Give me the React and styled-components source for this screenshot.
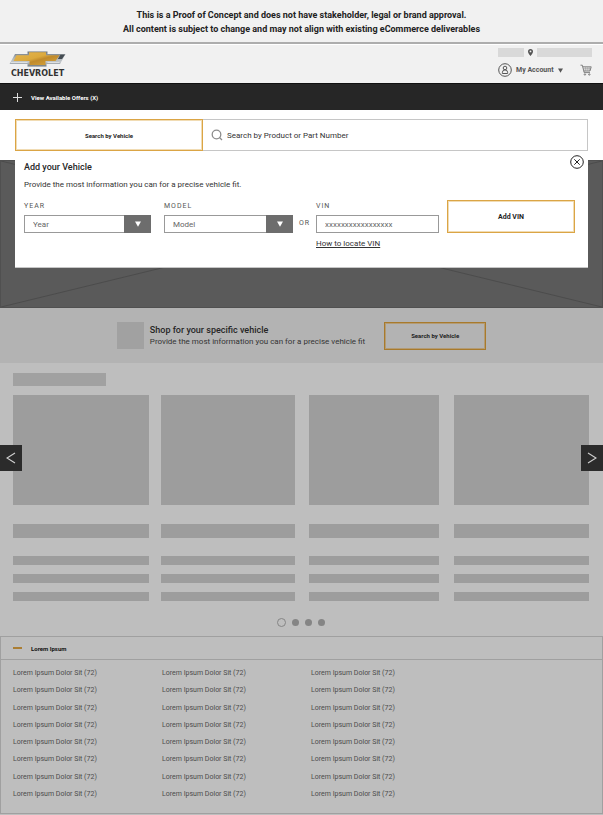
import React from "react";
import styled, { createGlobalStyle } from "styled-components";

const GlobalStyle = createGlobalStyle`
  *, *::before, *::after { box-sizing: border-box; }
  body { margin: 0; background: #bebebe; font-family: Roboto, "Liberation Sans", sans-serif; color: #262626; }
  button, input, select { font-family: inherit; margin: 0; border-radius: 0; }
  h2, p, ul { margin: 0; padding: 0; }
`;

const Notice = styled.p`
  background: #f1f1f1;
  border-bottom: 2px solid #adadad;
  padding: 8px 12px 6px;
  text-align: center;
  font-size: 9px;
  font-weight: 700;
  line-height: 14px;
  color: #222;
`;

const Header = styled.header`
  display: flex;
  justify-content: space-between;
  align-items: flex-start;
  min-height: 39px;
  padding: 3px 11px 0 9px;
  background: #f1f1f1;
  border-top: 1px solid #fff;
`;

const Brand = styled.a`
  display: flex;
  flex-direction: column;
  align-items: center;
  gap: 2px;
  margin-top: 3px;
  color: #333;
  text-decoration: none;
  font: 700 8px/10px "DejaVu Sans", sans-serif;
  svg { display: block; }
`;

const Tools = styled.div`
  display: flex;
  flex-direction: column;
  gap: 6px;
  width: 94px;
`;

const ToolRow = styled.div`
  display: flex;
  align-items: center;
  justify-content: space-between;
`;

const Block = styled.div`
  width: ${(p) => p.$w};
  height: ${(p) => p.$h};
  background: ${(p) => p.$tone || "#9d9d9d"};
`;

const PlainButton = styled.button`
  display: flex;
  align-items: center;
  gap: 4px;
  padding: 0;
  border: 0;
  background: none;
  color: #555;
  font-size: 7px;
  font-weight: 700;
  line-height: 14px;
  white-space: nowrap;
  svg { display: block; flex: none; }
`;

const Offers = styled.button`
  display: flex;
  align-items: center;
  gap: 9px;
  width: 100%;
  height: 27px;
  padding: 0 13px;
  border: 0;
  border-top: 1px solid #111;
  background: #262626;
  color: #fff;
  font-size: 6px;
  font-weight: 700;
`;

const SearchZone = styled.section`
  position: relative;
  background: #fff;
  padding: 9px 15px;
`;

const SearchRow = styled.div`
  display: grid;
  grid-template-columns: 188fr 385fr;
  height: 32px;
`;

const GoldButton = styled.button`
  height: ${(p) => p.$h};
  width: ${(p) => p.$w || "100%"};
  padding: 0;
  border: ${(p) => (p.$muted ? "1px solid #a87a2c" : "1px solid #dba545")};
  outline: 1px solid ${(p) => (p.$muted ? "#b39b74" : "#f1dcb4")};
  outline-offset: -2px;
  background: transparent;
  color: #1e1e1e;
  font-size: ${(p) => p.$size || "6px"};
  font-weight: 700;
`;

const SearchBox = styled.label`
  display: flex;
  align-items: center;
  gap: 4px;
  padding-left: 8px;
  border: 1px solid #c6c6c6;
  border-left: 0;
`;

const SearchInput = styled.input`
  flex: 1;
  min-width: 0;
  padding: 0;
  border: 0;
  background: none;
  font-size: 8px;
  color: #333;
  &::placeholder { color: #333; opacity: 1; }
`;

const Panel = styled.form`
  position: absolute;
  z-index: 2;
  left: 15px;
  right: 15px;
  top: 41px;
  min-height: 117px;
  padding: 10px 13px 16px 9px;
  background: #fff;
  border-bottom: 1px solid #c6c6c6;
`;

const Close = styled.button`
  position: absolute;
  top: 4px;
  right: 4px;
  padding: 0;
  border: 0;
  background: none;
  svg { display: block; }
`;

const Title = styled.h2`
  font-size: 9px;
  font-weight: 500;
  line-height: 12px;
`;

const Copy = styled.p`
  font-size: 8px;
  line-height: 12px;
  color: #333;
`;

const PanelCopy = styled(Copy)`
  margin-top: 6px;
`;

const Fields = styled.div`
  display: grid;
  grid-template-columns: 127fr 13px 129fr 23px 123fr 8px 128fr;
  margin-top: 9px;
`;

const Field = styled.div`
  display: flex;
  flex-direction: column;
`;

const Label = styled.label`
  font-size: 7px;
  line-height: 10px;
  margin: 1px 0 4px;
  letter-spacing: 1px;
  color: #555;
`;

const Or = styled.span`
  align-self: start;
  justify-self: center;
  margin-top: 18px;
  font-size: 7px;
  line-height: 10px;
  letter-spacing: 1px;
  color: #555;
`;

const SelectWrap = styled.div`
  display: grid;
  grid-template-columns: 1fr 27px;
`;

const Select = styled.select`
  grid-area: 1 / 1 / 2 / 3;
  appearance: none;
  height: 18px;
  padding: 0 30px 0 8px;
  border: 1px solid #999;
  background: #fff;
  color: #666;
  font-size: 8px;
`;

const SelectArrow = styled.span`
  grid-area: 1 / 2;
  display: grid;
  place-items: center;
  background: #6d6d6d;
  pointer-events: none;
`;

const VinInput = styled.input`
  width: 100%;
  height: 18px;
  padding: 0 8px;
  border: 1px solid #999;
  color: #666;
  font-size: 8px;
  &::placeholder { color: #666; opacity: 1; }
`;

const VinLink = styled.a`
  align-self: flex-start;
  margin-top: 5px;
  font-size: 8px;
  line-height: 12px;
  color: #333;
  text-underline-offset: 1px;
`;

const Hero = styled.div`
  height: 148px;
  background: #5a5a5a;
  border: 1px solid #505050;
  svg { display: block; width: 100%; height: 100%; }
`;

const Promo = styled.section`
  display: flex;
  align-items: center;
  justify-content: center;
  min-height: 55px;
  background: #b3b3b3;
`;

const PromoText = styled.div`
  margin: 0 19px 0 6px;
`;

const Carousel = styled.section`
  position: relative;
  padding: 10px 14px 9px 13px;
`;

const Cards = styled.div`
  display: grid;
  grid-template-columns: 136fr 12fr 134fr 15fr 130fr 15fr 135fr;
  margin-top: 9px;
`;

const Card = styled.article`
  display: flex;
  flex-direction: column;
  gap: 9px;
  &:nth-child(2) { grid-column: 3; }
  &:nth-child(3) { grid-column: 5; }
  &:nth-child(4) { grid-column: 7; }
`;

const CardTitle = styled.div`
  padding: 10px 0 9px;
`;

const Arrow = styled.button`
  position: absolute;
  top: 82px;
  ${(p) => p.$side}: 0;
  display: grid;
  place-items: center;
  width: 22px;
  height: 26px;
  padding: 0;
  border: 0;
  background: #2b2b2b;
`;

const Dots = styled.div`
  display: flex;
  align-items: center;
  justify-content: center;
  gap: 6px;
  margin-top: 17px;
`;

const Dot = styled.button`
  width: ${(p) => (p.$on ? "9px" : "7px")};
  height: ${(p) => (p.$on ? "9px" : "7px")};
  padding: 0;
  border: ${(p) => (p.$on ? "1px solid #858585" : "0")};
  border-radius: 50%;
  background: ${(p) => (p.$on ? "none" : "#858585")};
`;

const Accordion = styled.section`
  border: 1px solid #a0a0a0;
`;

const AccordionHead = styled.button`
  display: flex;
  align-items: center;
  gap: 9px;
  width: 100%;
  height: 23px;
  padding: 0 12px;
  border: 0;
  border-bottom: 1px solid #a0a0a0;
  background: none;
  color: #111;
  font-size: 6px;
  font-weight: 700;
`;

const LinkColumns = styled.div`
  display: grid;
  grid-template-columns: 149fr 149fr 291fr;
  padding: 8px 0 14px 12px;
`;

const LinkList = styled.ul`
  display: flex;
  flex-direction: column;
  justify-content: space-between;
  min-height: 131px;
  list-style: none;
  font-size: 7px;
  line-height: 10px;
  a { color: #4c4c4c; text-decoration: none; }
`;

const Bowtie = () => (
  <svg width="57" height="16" viewBox="0 0 57 16" aria-hidden="true">
    <defs>
      <linearGradient id="gold" x1="0" y1="0" x2="1" y2="1">
        <stop offset="0" stopColor="#e6b54d" />
        <stop offset=".45" stopColor="#dba93d" />
        <stop offset=".58" stopColor="#c08a2b" />
        <stop offset="1" stopColor="#dba93d" />
      </linearGradient>
      <linearGradient id="steel" x1="0" y1="0" x2="0" y2="1">
        <stop offset="0" stopColor="#6b7277" />
        <stop offset=".4" stopColor="#a9b0b5" />
        <stop offset=".7" stopColor="#c3c8cc" />
        <stop offset="1" stopColor="#6b747a" />
      </linearGradient>
    </defs>
    <path d="M6 3H18.500V.5H38.500V3H56.500L51 13H37.500V15.500H18.500V13H.5Z" fill="url(#steel)" />
    <path d="M7.500 4.200H20V1.300H37V4.200H50.500L46.500 10H36.500V14H20.500V10H4.500Z" fill="url(#gold)" />
    <path d="M51.500 3.800H55.800L53 8H48.800Z" fill="#444c52" />
    <path d="M2 11.500H18.500M38.500 11.500H50.500" stroke="#dde0e2" strokeWidth="1" />
  </svg>
);

const Triangle = ({ color, size = 6 }) => (
  <svg width={size} height={size} viewBox="0 0 6 6" aria-hidden="true">
    <path d="M0 .5H6L3 5.800Z" fill={color} />
  </svg>
);

const UserIcon = () => (
  <svg width="14" height="14" viewBox="0 0 14 14" fill="none" stroke="#555" aria-hidden="true">
    <circle cx="7" cy="7" r="6.300" />
    <circle cx="7" cy="5" r="1.800" />
    <path d="M4.400 10.500V9.300Q4.400 6.900 7 6.900T9.600 9.300V10.500Z" />
  </svg>
);

const CartIcon = () => (
  <svg width="12" height="12" viewBox="0 0 12 12" fill="none" stroke="#666" strokeWidth=".8" aria-hidden="true">
    <path d="M.5 1.200H2.300L4.200 8.600H10M2.800 2.800H11.200L10 7H3.800" />
    <path d="M5.300 3V6.800M7.200 3V6.800M9.100 3V6.800M3.300 4.800H10.600" strokeWidth=".4" />
    <circle cx="4.900" cy="10.500" r=".7" />
    <circle cx="9.300" cy="10.500" r=".7" />
  </svg>
);

const PinIcon = () => (
  <svg width="5" height="7" viewBox="0 0 5 7" aria-hidden="true">
    <path d="M2.500 0A2.500 2.500 0 0 1 5 2.500C5 4.200 2.500 7 2.500 7S0 4.200 0 2.500A2.500 2.500 0 0 1 2.500 0Z" fill="#555" />
    <circle cx="2.500" cy="2.400" r=".9" fill="#f1f1f1" />
  </svg>
);

const Chevron = ({ d }) => (
  <svg width="10" height="12" viewBox="0 0 10 12" fill="none" stroke="#d0d0d0" strokeWidth="1.100" aria-hidden="true">
    <path d={d} />
  </svg>
);

const Dropdown = ({ id, label }) => (
  <Field>
    <Label htmlFor={id}>{label.toUpperCase()}</Label>
    <SelectWrap>
      <Select id={id}>
        <option>{label}</option>
      </Select>
      <SelectArrow>
        <Triangle color="#fff" />
      </SelectArrow>
    </SelectWrap>
  </Field>
);

const rows = Array.from({ length: 8 });
const quad = [0, 1, 2, 3];

export default function App() {
  return (
    <>
      <GlobalStyle />
      <Notice>
        This is a Proof of Concept and does not have stakeholder, legal or brand approval.
        <br />
        All content is subject to change and may not align with existing eCommerce deliverables
      </Notice>
      <Header>
        <Brand href="#">
          <Bowtie />
          CHEVROLET
        </Brand>
        <Tools>
          <ToolRow>
            <Block $w="26px" $h="9px" $tone="#d9d9d9" />
            <PinIcon />
            <Block $w="55px" $h="9px" $tone="#d9d9d9" />
          </ToolRow>
          <ToolRow>
            <PlainButton type="button">
              <UserIcon />
              My Account
              <Triangle color="#555" size={5} />
            </PlainButton>
            <PlainButton type="button" aria-label="Cart">
              <CartIcon />
            </PlainButton>
          </ToolRow>
        </Tools>
      </Header>
      <Offers type="button">
        <svg width="9" height="9" viewBox="0 0 9 9" stroke="#ddd" aria-hidden="true">
          <path d="M0 4.500H9M4.500 0V9" />
        </svg>
        View Available Offers (X)
      </Offers>
      <SearchZone>
        <SearchRow>
          <GoldButton type="button" $h="32px">Search by Vehicle</GoldButton>
          <SearchBox>
            <svg width="12" height="12" viewBox="0 0 12 12" fill="none" stroke="#8c8c8c" strokeWidth="1.300" aria-hidden="true">
              <circle cx="5.500" cy="5.500" r="4.300" />
              <path d="M8.500 8.500L11 11" />
            </svg>
            <SearchInput aria-label="Search" placeholder="Search by Product or Part Number" />
          </SearchBox>
        </SearchRow>
        <Panel>
          <Close type="button" aria-label="Close">
            <svg width="14" height="14" viewBox="0 0 14 14" fill="none" stroke="#222" aria-hidden="true">
              <circle cx="7" cy="7" r="6.300" />
              <path d="M4.300 4.300L9.700 9.700M9.700 4.300L4.300 9.700" />
            </svg>
          </Close>
          <Title>Add your Vehicle</Title>
          <PanelCopy>Provide the most information you can for a precise vehicle fit.</PanelCopy>
          <Fields>
            <Dropdown id="year" label="Year" />
            <span />
            <Dropdown id="model" label="Model" />
            <Or>OR</Or>
            <Field>
              <Label htmlFor="vin">VIN</Label>
              <VinInput id="vin" placeholder="xxxxxxxxxxxxxxxxx" />
              <VinLink href="#">How to locate VIN</VinLink>
            </Field>
            <span />
            <GoldButton type="button" $h="33px" $size="7px">Add VIN</GoldButton>
          </Fields>
        </Panel>
      </SearchZone>
      <Hero>
        <svg viewBox="0 0 601 146" preserveAspectRatio="none" stroke="#4c4c4c" aria-hidden="true">
          <path d="M0 0L601 146M601 0L0 146" />
        </svg>
      </Hero>
      <Promo>
        <Block $w="27px" $h="27px" $tone="#a1a1a1" />
        <PromoText>
          <Title>Shop for your specific vehicle</Title>
          <Copy>Provide the most information you can for a precise vehicle fit</Copy>
        </PromoText>
        <GoldButton type="button" $muted $w="102px" $h="28px">Search by Vehicle</GoldButton>
      </Promo>
      <Carousel>
        <Block $w="93px" $h="13px" $tone="#a1a1a1" />
        <Cards>
          {quad.map((n) => (
            <Card key={n}>
              <Block $w="100%" $h="110px" />
              <CardTitle>
                <Block $w="100%" $h="14px" />
              </CardTitle>
              <Block $w="100%" $h="9px" />
              <Block $w="100%" $h="9px" />
              <Block $w="100%" $h="9px" />
            </Card>
          ))}
        </Cards>
        <Arrow type="button" $side="left" aria-label="Previous">
          <Chevron d="M9 1L1 6L9 11" />
        </Arrow>
        <Arrow type="button" $side="right" aria-label="Next">
          <Chevron d="M1 1L9 6L1 11" />
        </Arrow>
        <Dots>
          {quad.map((n) => (
            <Dot key={n} type="button" $on={n === 0} aria-label={`Slide ${n + 1}`} />
          ))}
        </Dots>
      </Carousel>
      <Accordion>
        <AccordionHead type="button" aria-expanded="true">
          <svg width="9" height="2" viewBox="0 0 9 2" aria-hidden="true">
            <path d="M0 1H9" stroke="#ab7e33" strokeWidth="2" />
          </svg>
          Lorem Ipsum
        </AccordionHead>
        <LinkColumns>
          {[0, 1, 2].map((c) => (
            <LinkList key={c}>
              {rows.map((_, r) => (
                <li key={r}>
                  <a href="#">Lorem Ipsum Dolor Sit (72)</a>
                </li>
              ))}
            </LinkList>
          ))}
        </LinkColumns>
      </Accordion>
    </>
  );
}
